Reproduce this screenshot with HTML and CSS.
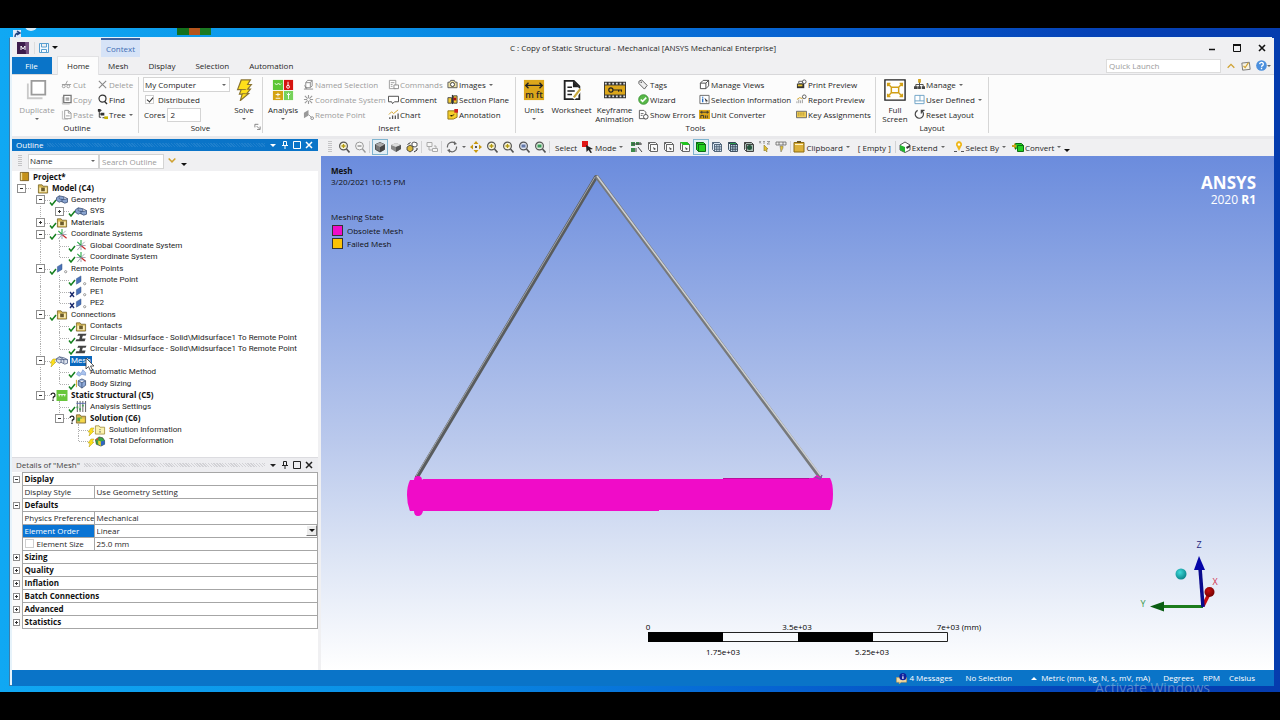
FILE: index.html
```html
<!DOCTYPE html>
<html lang="en">
<head>
<meta charset="utf-8">
<title>C : Copy of Static Structural - Mechanical [ANSYS Mechanical Enterprise]</title>
<link rel="stylesheet" href="styles.css">
</head>
<body>
<svg class="defs" aria-hidden="true">
  <defs>
    <radialGradient id="ballC" cx=".4" cy=".35" r=".7"><stop offset="0" stop-color="#3fdada"/><stop offset="1" stop-color="#067f86"/></radialGradient>
    <radialGradient id="ballR" cx=".4" cy=".35" r=".7"><stop offset="0" stop-color="#c80f0f"/><stop offset="1" stop-color="#6e0000"/></radialGradient>
  </defs>
  <symbol id="logo" viewBox="0 0 12 12"><path fill="#3d1d4c" d="M0 0h12v12H0z"/><path fill="#74507f" d="M8 0h4v12H9z"/><path fill="none" stroke="#fff" d="M4 8V4l2 3 2-3v4"/></symbol>
  <symbol id="save" viewBox="0 0 12 12"><path fill="#f4faff" stroke="#5a9fd0" d="M1.500 1.500h9v9h-9zM3.500 1.500v3.500h5v-3.500M3.500 10.500v-3h5v3"/></symbol>
  <symbol id="duplicate" viewBox="0 0 24 24"><path fill="none" stroke="#c9c9c9" stroke-width="2" d="M2 5v16h16"/><path fill="#fff" stroke="#9b9b9b" stroke-width="2" d="M6 2h15v15H6z"/></symbol>
  <symbol id="cut" viewBox="0 0 12 12"><path fill="none" stroke="#999" d="M1 6h10M7 2L5 6"/><circle cx="3" cy="8" r="1.600" fill="none" stroke="#999"/><circle cx="8" cy="8" r="1.600" fill="none" stroke="#999"/></symbol>
  <symbol id="copy" viewBox="0 0 12 12"><path fill="none" stroke="#bbb" d="M1.500 3v8h8"/><path fill="#fff" stroke="#777" stroke-width="1.400" d="M3 1.500h8v8H3z"/><path stroke="#666" d="M5 4.500h4M5 6.500h4"/></symbol>
  <symbol id="paste" viewBox="0 0 12 12"><path fill="none" stroke="#bbb" d="M1.500 2v9h6"/><path fill="#fff" stroke="#999" d="M4 1.500h4l3 3v6H4zM8 1.500v3h3"/><path stroke="#999" d="M5.500 7.500h4"/></symbol>
  <symbol id="delete" viewBox="0 0 12 12"><path stroke="#888" stroke-width="1.200" d="M2 2l8 8M10 2l-8 8"/></symbol>
  <symbol id="find" viewBox="0 0 12 12"><circle cx="6" cy="5" r="3.800" fill="none" stroke="#333" stroke-width="1.300"/><path stroke="#333" stroke-width="1.500" d="M8 8l3 3"/></symbol>
  <symbol id="tree" viewBox="0 0 12 12"><path fill="none" stroke="#333" d="M1 1.500h4M2.500 2v7M2.500 5.500h4M6 9.500h6M2.500 9h2"/><path fill="#333" d="M1 0h3v3H1zM4 4h4v3H4z"/><path fill="#c8b400" d="M8 8h4v3H8z"/></symbol>
  <symbol id="bolt" viewBox="0 0 24 24"><path fill="#ffe01a" stroke="#8a7430" stroke-width="1.300" d="M9 1h10l-3 5h4l-4 5h3l-4 5h2L8 23.500l2-7H7l2-5H5z"/><path stroke="#8a7430" d="M9 11.500h5M10 16h4"/></symbol>
  <symbol id="analysis" viewBox="0 0 24 24"><path fill="#5cc735" d="M1 1h11v11H1z"/><path fill="#d5140f" d="M13 1h10v11H13z"/><path fill="#d4a312" d="M1 13h11v10H1z"/><path fill="#76d25a" d="M13 13h10v10H13z"/><path fill="none" stroke="#fff" d="M3 5l2 1 2-1 2 1 1-1M17.500 3v5M4 17h5M6.500 15v4M4 21h5M16 16l2 2 2-2M18 15v7"/><circle cx="17.500" cy="8.500" r="1.600" fill="none" stroke="#fff"/></symbol>
  <symbol id="named" viewBox="0 0 12 12"><path fill="#fff" stroke="#888" d="M3 4l2-2.500h5v6l-2 2H3zM3 4h5v5M8 4l2-2.500M1 11h10"/><path fill="#888" d="M1 6l4 4-2 1z"/></symbol>
  <symbol id="coordg" viewBox="0 0 12 12"><path stroke="#9a9a9a" stroke-width="1.200" d="M6 1v10M1 6h10M2 2l8 8M10 2l-8 8"/><circle cx="6" cy="6" r="1.500" fill="#fff"/></symbol>
  <symbol id="remoteg" viewBox="0 0 12 12"><path fill="#999" d="M1 4l5-3v6l-5 3z"/><path stroke="#999" fill="none" d="M6 6l3 3"/><circle cx="10" cy="10" r="1.500" fill="none" stroke="#888"/></symbol>
  <symbol id="commands" viewBox="0 0 12 12"><path fill="#fff" stroke="#999" d="M1.500 1.500h7v9h-7z"/><path stroke="#999" d="M3 4h4M3 6h2M3 8h2"/><path fill="#fff" stroke="#888" d="M6.500 6.500h5v4h-5z"/></symbol>
  <symbol id="comment" viewBox="0 0 12 12"><path fill="#fff" stroke="#444" d="M.500 2.500h11v6H7l-2 2-1-2H.500z"/></symbol>
  <symbol id="chart" viewBox="0 0 12 12"><path stroke="#555" stroke-width="1.400" d="M2 11V9M5 11V7M8 11V7M11 11V5"/><path fill="none" stroke="#d0a020" d="M1 6l3-3 2 2 5-4"/></symbol>
  <symbol id="camera" viewBox="0 0 12 12"><path fill="#efe3a8" stroke="#555" d="M1 3.500h2l1-2h4l1 2h2v6H1z"/><circle cx="6" cy="6" r="2.200" fill="#fff" stroke="#333"/></symbol>
  <symbol id="section" viewBox="0 0 12 12"><path fill="#f4cc30" stroke="#444" d="M1 4h4v6H1zM7 2h4v8H7z"/><path stroke="#333" stroke-width="1.400" d="M6 1v10"/><path fill="#a11" d="M7 4h3v3H7z"/></symbol>
  <symbol id="annot" viewBox="0 0 12 12"><path fill="#f6cf2b" stroke="#8f7410" d="M1 2h10v7l-4 2H1z"/><path fill="#c22" d="M8 0h4v4H8z"/><path stroke="#7b6414" d="M3 7l2 1 3-2"/></symbol>
  <symbol id="units" viewBox="0 0 24 24"><path fill="#dca71b" d="M1 1h22v22H1z"/><path stroke="#222" stroke-width="1.500" fill="none" d="M3 7h18M6 4L3 7l3 3M18 4l3 3-3 3"/></symbol>
  <symbol id="worksheet" viewBox="0 0 24 24"><path fill="#fff" stroke="#222" stroke-width="2" d="M4 2h10l6 6v14H4z"/><path fill="#222" d="M13 2v7h7z"/><path stroke="#222" stroke-width="1.600" d="M7 9h5M7 13h8M7 17h5"/><path stroke="#fff" stroke-width="5" d="M13 21l8-10"/><path stroke="#c8a83c" stroke-width="2.400" d="M14 20l7-9"/></symbol>
  <symbol id="film" viewBox="0 0 24 24"><path fill="#333" d="M0 3h24v18H0z"/><path stroke="#ddd" stroke-width="2" stroke-dasharray="2 2" d="M1 5h22M1 19h22"/><path fill="#dca71b" d="M1 7h22v10H1z"/><path fill="none" stroke="#222" stroke-width="1.300" d="M10 12h9v2M16 12v2"/><circle cx="7.500" cy="12" r="2.300" fill="none" stroke="#222" stroke-width="1.300"/></symbol>
  <symbol id="tag" viewBox="0 0 12 12"><path fill="#eee" stroke="#555" d="M1 2.500L4 1l6 6-3 4-6-6z"/><circle cx="3.500" cy="3.500" r=".8" fill="#444"/></symbol>
  <symbol id="wizard" viewBox="0 0 12 12"><circle cx="6" cy="6" r="5.300" fill="#58b848" stroke="#318a2c" stroke-width=".8"/><path fill="none" stroke="#fff" stroke-width="1.700" d="M3 6l2 2 4-4"/></symbol>
  <symbol id="errors" viewBox="0 0 12 12"><path fill="#fff" stroke="#555" d="M1.500 1.500h5l2 2v7h-7z"/><path stroke="#666" d="M3 5h3M3 7h2"/><circle cx="8.500" cy="8.500" r="2.500" fill="#fff" stroke="#444"/></symbol>
  <symbol id="cube" viewBox="0 0 12 12"><path fill="#fff" stroke="#444" d="M1.500 4.500h6v6h-6zM1.500 4.500l3-3h6v6l-3 3M7.500 4.500l3-3"/></symbol>
  <symbol id="selinfo" viewBox="0 0 12 12"><path fill="#fff" stroke="#666" d="M1 1.500h10v9H1z"/><path stroke="#2770c8" stroke-width="1.500" d="M4 3v1M4 5v4"/><path fill="#333" d="M6 4l4 4H8v2z"/></symbol>
  <symbol id="uconv" viewBox="0 0 12 12"><path fill="#dca71b" d="M0 1h12v10H0z"/><path fill="none" stroke="#333" d="M1 3.500h10M3 2v3M9 2v3M2 10V7h3v3M7 10V7M9 7v3"/></symbol>
  <symbol id="print" viewBox="0 0 12 12"><path fill="#333" d="M1 5h8v5H1z"/><path fill="#e8c430" d="M2 6h5v2H2z"/><path fill="#fff" stroke="#555" d="M3 2.500h4V5H3z"/><circle cx="9" cy="3" r="2" fill="#fff" stroke="#555"/></symbol>
  <symbol id="report" viewBox="0 0 12 12"><path stroke="#999" fill="none" d="M1 10V8M3 10V6M5 10V7M7 10V6"/><path fill="none" stroke="#d0a020" d="M1 6l3-2 3 1"/><circle cx="9" cy="3" r="2" fill="#fff" stroke="#555"/></symbol>
  <symbol id="keys" viewBox="0 0 12 12"><path fill="#f1cf5a" stroke="#666" d="M.500 2.500h11v7H.500z"/><path stroke="#8a6d14" stroke-dasharray="1 1" d="M2 4.500h8M2 6.500h8"/></symbol>
  <symbol id="full" viewBox="0 0 24 24"><path fill="#fff" stroke="#222" stroke-width="1.500" d="M1 1h22v22H1z"/><path fill="none" stroke="#d2a017" stroke-width="1.600" d="M8 9h8v6H8zM8 9L4 5M16 9l4-4M8 15l-4 4M16 15l4 4M4 8V5h3M20 8V5h-3M4 16v3h3M20 16v3h-3"/></symbol>
  <symbol id="manage" viewBox="0 0 12 12"><path fill="none" stroke="#444" d="M6 3v3M2 9V6h8v3M6 6v3"/><path fill="#d2a017" d="M4.500 0h3v4h-3z"/><path fill="#444" d="M0 8h4v3H0zM4.500 8h3v3h-3zM8.500 8H12v3H8.500z"/></symbol>
  <symbol id="user" viewBox="0 0 12 12"><path fill="#fff" stroke="#6aa0c4" d="M1 1.500h10v9H1zM6.500 1.500v6M1 7.500h10"/></symbol>
  <symbol id="reset" viewBox="0 0 12 12"><path fill="none" stroke="#444" stroke-width="1.300" d="M4 1.500a4.500 4.500 0 1 0 4.500.5M8 5V1.500h3.500"/></symbol>
  <symbol id="mag" viewBox="0 0 12 12"><circle cx="5.500" cy="5" r="3.900" fill="#f8f4d8" stroke="#555" stroke-width="1.200"/><path stroke="#555" stroke-width="1.600" d="M8.500 8l3 3.500"/><path stroke="#b39a10" stroke-width="1.300" d="M3.500 5h4M5.500 3v4"/></symbol>
  <symbol id="magg" viewBox="0 0 12 12"><circle cx="5.500" cy="5" r="3.900" fill="#f7f7f7" stroke="#999"/><path stroke="#999" stroke-width="1.400" d="M8.500 8l3 3.500M3.500 5h4"/></symbol>
  <symbol id="magb" viewBox="0 0 12 12"><circle cx="5.500" cy="5" r="3.900" fill="#dfe5f2" stroke="#555" stroke-width="1.200"/><path fill="#6478a8" d="M3.500 3.500h4v3h-4z"/><path stroke="#555" stroke-width="1.600" d="M8.500 8l3 3.500"/></symbol>
  <symbol id="magn" viewBox="0 0 12 12"><circle cx="5.500" cy="5" r="3.900" fill="#dff0df" stroke="#555" stroke-width="1.200"/><path fill="#3a9a58" d="M3.500 3.500h4v3h-4z"/><path stroke="#555" stroke-width="1.600" d="M8.500 8l3 3.500"/></symbol>
  <symbol id="shaded" viewBox="0 0 12 12"><path fill="#777" stroke="#333" stroke-width=".8" d="M1.500 3.500L6 1.500l4.500 2v5L6 11 1.500 8.500z"/><path fill="#444" d="M6 6l4.500-2.500v5L6 11z"/><path fill="#aaa" d="M1.500 3.500L6 1.500l4.500 2L6 6z"/></symbol>
  <symbol id="slab" viewBox="0 0 12 12"><path fill="#888" d="M1 4l5-2 5 2v4l-5 3-5-3z"/><path fill="#ddd" d="M1 4l5-2 5 2-5 2z"/><path fill="#555" d="M6 6l5-2v4l-5 3z"/></symbol>
  <symbol id="swap" viewBox="0 0 12 12"><path fill="#d8b63a" stroke="#333" stroke-width=".8" d="M1 6l3-2 3 2v3l-3 2-3-2z"/><path fill="#fff" stroke="#333" stroke-width=".8" d="M6 2l2-1 3 1v3L9 6 6 5z"/><path fill="none" stroke="#333" d="M1.500 3.500l3-2M11 7v2l-3 2"/></symbol>
  <symbol id="layers" viewBox="0 0 12 12"><path fill="#f6f6f6" stroke="#aaa" d="M1 1.500h5v4H1zM6.500 7.500h5v3h-5z"/><path fill="none" stroke="#aaa" d="M3 6v3h3M8 5h2v2"/></symbol>
  <symbol id="rotate" viewBox="0 0 12 12"><path fill="none" stroke="#666" stroke-width="1.200" d="M1.500 6.500A4.500 4.500 0 0 1 9 2.500M10.500 5.500A4.500 4.500 0 0 1 3 9.500"/><path fill="#666" d="M8 0l3 3-3 1zM4 12L1 9l3-1z"/></symbol>
  <symbol id="pan" viewBox="0 0 12 12"><path fill="#c99a10" d="M6 0l2.500 3h-5zM6 12l2.500-3h-5zM0 6l3-2.500v5zM12 6L9 3.500v5z"/><path fill="#555" d="M5 5h2v2H5z"/></symbol>
  <symbol id="pick" viewBox="0 0 12 12"><path fill="#e01616" d="M0 0h6v6H0z"/><path fill="#222" d="M4 4l7 4-3 .5 2 3-1.500.5-2-3-2 2z"/></symbol>
  <symbol id="filter" viewBox="0 0 12 12"><path fill="#3d8a4c" d="M0 1h4v4H0zM5 1h3v3H5zM0 7h4v4H0z"/><path stroke="#444" fill="none" d="M1 3h10M9 1v3M5 7v4M7 6l4 5"/></symbol>
  <symbol id="selcube" viewBox="0 0 12 12"><path fill="#fafafa" stroke="#666" d="M3.500 3.500h7v7h-7zM1.500 8.500v-7h7l2 2M1.500 1.500l2 2M1.500 8.500l2 2"/><path fill="#444" d="M6 6l3 2-2 1z"/></symbol>
  <symbol id="selface" viewBox="0 0 12 12"><path fill="#fafafa" stroke="#666" d="M3.500 3.500h7v7h-7zM1.500 8.500v-7h7l2 2M1.500 8.500l2 2"/><path fill="#21c321" d="M1 1h7l3 3H4z"/><path fill="#444" d="M6 6l3 2-2 1z"/></symbol>
  <symbol id="selbody" viewBox="0 0 12 12"><path fill="#22cf22" stroke="#0d6d12" d="M3.500 3.500h7v7h-7zM1.500 8.500v-7h7l2 2h-7l-2-2M1.500 8.500l2 2v-7l-2-2z"/></symbol>
  <symbol id="selnode" viewBox="0 0 12 12"><path fill="#dbe7f4" stroke="#44596e" stroke-width=".9" d="M3.500 3.500h7v7h-7zM1.500 8.500v-7h7l2 2M1.500 8.500l2 2M1.500 1.500l2 2M5.800 3.500v7M8.200 3.500v7M3.500 5.800h7M3.500 8.200h7"/></symbol>
  <symbol id="selelem" viewBox="0 0 12 12"><path fill="#c3dcec" stroke="#345" stroke-width=".9" d="M3.500 3.500h7v7h-7zM5.800 3.500v7M8.200 3.500v7M3.500 5.800h7M3.500 8.200h7M1.500 1.500v7l2 2"/><path fill="#2d9d50" stroke="#345" d="M1.500 1.500h7l2 2h-7z"/></symbol>
  <symbol id="seldark" viewBox="0 0 12 12"><path fill="#a9bdb5" stroke="#444" d="M3.500 3.500h7v7h-7zM1.500 8.500v-7h7l2 2M1.500 1.500l2 2M1.500 8.500l2 2"/><circle cx="6.500" cy="6.500" r="2.500" fill="#24563c"/></symbol>
  <symbol id="xyz" viewBox="0 0 12 12"><path fill="none" stroke="#888" stroke-width=".8" d="M0 0l2 2.500M2 0L0 2.500M4 0l1 1 1-1M5 1v2M8 .500h3L8 3h3"/><path fill="#e6c12e" stroke="#8b7a26" stroke-width=".6" d="M5 4l4 4H7.500L8 11l-2-2-1 1z"/></symbol>
  <symbol id="probe" viewBox="0 0 12 12"><path fill="#eee" stroke="#666" stroke-width=".8" d="M1 1h10v3H1zM4 1v3M8 1v3"/><path fill="#e6c12e" stroke="#777" stroke-width=".6" d="M5 5h3v2L6 11z"/></symbol>
  <symbol id="clip" viewBox="0 0 12 12"><path fill="#dcb13a" stroke="#8b6b13" d="M1 1.500h10v9.500H1z"/><path stroke="#fff3c2" d="M2 3.500h8"/><path fill="#6a5520" d="M4 0h4v2H4z"/></symbol>
  <symbol id="extend" viewBox="0 0 12 12"><path fill="#fff" stroke="#333" stroke-width=".8" d="M1 4l5-3 5 3v5l-5 2.500L1 9z"/><path fill="#23b52e" d="M1 4l5 2v5.500L1 9z"/><path fill="#333" d="M7 6l4-2v2L8 8z"/></symbol>
  <symbol id="pin" viewBox="0 0 12 12"><path fill="#efb81d" d="M6 0a3.500 3.500 0 0 1 2 6L6 10 4 6a3.500 3.500 0 0 1 2-6z"/><circle cx="6" cy="3.500" r="1.200" fill="#fff"/><path stroke="#555" d="M1 10.500h3M8 10.500h3"/></symbol>
  <symbol id="convert" viewBox="0 0 12 12"><path fill="#22cf22" stroke="#0d6d12" d="M5.500 4.500h6v6h-6zM3.500 8.500v-6h6l2 2"/><path fill="#c9a21c" d="M0 4h2V2l3 3-3 3V6H0z"/></symbol>
  <symbol id="chk" viewBox="0 0 8 12"><path fill="none" stroke="#15801f" stroke-width="1.500" d="M1 8.500L3 11l4-5"/></symbol>
  <symbol id="xx" viewBox="0 0 8 12"><path stroke="#1a2a6c" stroke-width="1.400" d="M2 6l4 5M6 6l-4 5"/></symbol>
  <symbol id="zap" viewBox="0 0 8 12"><path fill="#ffe21a" stroke="#b39a14" stroke-width=".5" d="M4 4h3L5 7h2L2 12l1-4H1z"/></symbol>
  <symbol id="qm" viewBox="0 0 8 12"><path fill="none" stroke="#222" stroke-width="1.300" d="M2 6a2 2 0 1 1 2.500 2L4 9.500M4 10.500V12"/></symbol>
  <symbol id="book" viewBox="0 0 12 12"><path fill="#c5921a" stroke="#5e4710" stroke-width=".8" d="M2 1.500h9v9H2z"/><path fill="#f3df9c" d="M2.500 2H4v8H2.500z"/></symbol>
  <symbol id="folder" viewBox="0 0 12 12"><path fill="#d8b850" stroke="#6d5a20" stroke-width=".8" d="M1 2h4l1 1.500h5V11H1z"/><path fill="#fbeeb8" d="M2 5h8v5H2z"/><path fill="#6b5b2b" d="M4 5h4v4H4z"/></symbol>
  <symbol id="foldgreen" viewBox="0 0 12 12"><path fill="#d8b850" stroke="#6d5a20" stroke-width=".8" d="M1 2h4l1 1.500h5V11H1z"/><path fill="#4ba84b" d="M2 5h5v4H2z"/><path fill="#f5d84a" d="M5 6h5v4H5z"/></symbol>
  <symbol id="foldplain" viewBox="0 0 12 12"><path fill="#fbf2b0" stroke="#98822b" stroke-width=".8" d="M1 2h4l1 1.500h5V11H1z"/><path stroke="#555" d="M6 5.500v1M6 7.500v2"/></symbol>
  <symbol id="geom" viewBox="0 0 12 12"><path fill="#8aa4cf" stroke="#32476f" stroke-width=".8" d="M0 4l3-2 5 1 4 2v4l-3 1-4-2-2 1-3-2zM3 2v3l3 1V9M8 3v3l4-1M6 6l2 0"/></symbol>
  <symbol id="meshic" viewBox="0 0 12 12"><path fill="#dce2ee" stroke="#41537c" stroke-width=".8" d="M0 4l3-2 5 1 4 2v4l-3 1-4-2-2 1-3-2zM0 4l5 1 7 0M5 5v3M3 2l5 3v4"/></symbol>
  <symbol id="coord" viewBox="0 0 12 12"><path stroke="#2aa84a" stroke-width="1.200" d="M6 6V0M6 6L2 2"/><path stroke="#c42a2a" stroke-width="1.300" d="M6 6l5 4"/><path stroke="#889" stroke-width=".8" d="M6 6l-4 5M1 6h10M6 6l4-4M6 6v5"/></symbol>
  <symbol id="remote" viewBox="0 0 12 12"><path fill="#4a72b8" stroke="#2c4a80" stroke-width=".5" d="M1 4l5-3v6l-5 3z"/><circle cx="10" cy="9.500" r="1.200" fill="none" stroke="#777" stroke-width=".8"/></symbol>
  <symbol id="beam" viewBox="0 0 12 12"><path fill="#444" d="M3 2h9l-1 2H8L7 7h4l-1 3H0l1-2h3l1-4H2z"/></symbol>
  <symbol id="auto" viewBox="0 0 12 12"><path fill="#a9c3ee" stroke="#6788c4" stroke-width=".6" d="M1 8l2-3 3 2 2-4 3 3v3L7 8 4 10z"/></symbol>
  <symbol id="sizing" viewBox="0 0 12 12"><path fill="#8fabda" stroke="#32476f" stroke-width=".8" d="M3 3l4-2 4 2v5L7 11 3 8zM3 3l4 2 4-2M7 5v6"/><path stroke="#c9a21c" d="M1 2v8"/></symbol>
  <symbol id="struct" viewBox="0 0 12 12"><path fill="#67c63a" d="M0 0h12v12H0z"/><path fill="none" stroke="#fff" d="M2 5h8M3 5v2M6 5v2M9 5v2"/></symbol>
  <symbol id="setting" viewBox="0 0 12 12"><path stroke="#555" d="M2 0v12M5 0v12M8 0v12M11 0v12"/><path fill="#4aa35a" d="M1 6h2v2H1zM4 8h2v2H4zM7 4h2v2H7z"/><path fill="#5468b0" d="M1 2h10v1H1z"/></symbol>
  <symbol id="deform" viewBox="0 0 12 12"><path fill="#39a545" stroke="#222" stroke-width=".6" d="M1 4l4-3 4 1 2 3v4l-4 2-5-2z"/><path fill="#d64a28" d="M1 4l3-2v3z"/><path fill="#e9cf2c" d="M4 5l3 1v5L4 9z"/><path fill="#2f64c4" d="M7 6l4-1v4l-4 2z"/></symbol>
</svg>

<div class="desktop">
  <div class="shortcut"><svg viewBox="0 0 8 8"><path fill="#dfeafa" d="M0 0h8v8H0z"/><path fill="none" stroke="#21417f" stroke-width="1.400" d="M2 7c0-3 1-4 4-4M4 1l3 2-3 2"/></svg></div>
  <div class="globe"></div>
  <div class="books"></div>

  <main class="window">
    <header class="titlebar">
      <div class="quick">
        <svg class="ic12"><use href="#logo"/></svg>
        <button class="plain qsave" aria-label="Save"><svg class="ic12"><use href="#save"/></svg></button>
        <button class="plain" aria-label="Customize"><span class="dd dark"></span></button>
      </div>
      <div class="context">Context</div>
      <h1>C : Copy of Static Structural - Mechanical [ANSYS Mechanical Enterprise]</h1>
      <div class="winbtns">
        <button class="plain" aria-label="Minimize"><svg viewBox="0 0 8 8"><path stroke="#111" stroke-width="1.500" d="M1 5.500h6"/></svg></button>
        <button class="plain" aria-label="Maximize"><svg viewBox="0 0 8 8"><path fill="none" stroke="#111" d="M.500.500h7v7h-7z"/><path fill="#111" d="M0 0h8v2H0z"/></svg></button>
        <button class="plain" aria-label="Close"><svg viewBox="0 0 8 8"><path stroke="#111" stroke-width="1.600" d="M1 1l6 6M7 1L1 7"/></svg></button>
      </div>
    </header>

    <nav class="tabs">
      <button class="tab file">File</button>
      <button class="tab active">Home</button>
      <button class="tab">Mesh</button>
      <button class="tab">Display</button>
      <button class="tab">Selection</button>
      <button class="tab">Automation</button>
      <div class="tabtools">
        <input class="launch" type="text" placeholder="Quick Launch" aria-label="Quick Launch">
        <button class="plain" aria-label="Collapse ribbon"><svg viewBox="0 0 12 12"><path fill="none" stroke="#cfa233" stroke-width="1.600" d="M2 8l4-4 4 4"/></svg></button>
        <button class="plain" aria-label="Options"><svg viewBox="0 0 12 12"><path fill="#f8f4e4" stroke="#666" d="M1 2.500l9-1 1 8.500-9 1z"/><path fill="none" stroke="#cfa233" stroke-width="1.400" d="M3 6l2 2 4-6"/></svg></button>
        <button class="plain help" aria-label="Help"><svg viewBox="0 0 12 12"><circle cx="6" cy="6" r="5.800" fill="#4b8fdd"/><path fill="none" stroke="#fff" stroke-width="1.500" d="M4 4.500a2 2 0 1 1 2.500 2L6 7.500M6 8.500V10"/></svg><span class="dd"></span></button>
      </div>
    </nav>

    <section class="ribbon">
      <div class="group g-outline">
        <button class="big off"><svg><use href="#duplicate"/></svg>Duplicate<span class="dd"></span></button>
        <div class="col">
          <button class="small off"><svg><use href="#cut"/></svg>Cut</button>
          <button class="small off"><svg><use href="#copy"/></svg>Copy</button>
          <button class="small off"><svg><use href="#paste"/></svg>Paste</button>
        </div>
        <div class="col">
          <button class="small off"><svg><use href="#delete"/></svg>Delete</button>
          <button class="small"><svg><use href="#find"/></svg>Find</button>
          <button class="small"><svg><use href="#tree"/></svg>Tree<span class="dd"></span></button>
        </div>
        <h2>Outline</h2>
      </div>
      <div class="group g-solve">
        <div class="col form">
          <div class="pick"><select aria-label="Solve location"><option>My Computer</option></select><span class="dd"></span></div>
          <label class="tick"><input type="checkbox" checked>Distributed</label>
          <label class="cores">Cores<input type="text" value="2"></label>
        </div>
        <button class="big"><svg><use href="#bolt"/></svg>Solve<span class="dd"></span></button>
        <h2>Solve</h2>
        <button class="plain launcher" aria-label="Solve options"><svg viewBox="0 0 8 8"><path fill="none" stroke="#777" d="M1 5V1.500h4M3 3.500l3 3M7 4v3.500H3.500"/></svg></button>
      </div>
      <div class="group g-insert">
        <button class="big"><svg><use href="#analysis"/></svg>Analysis<span class="dd"></span></button>
        <div class="col">
          <button class="small off"><svg><use href="#named"/></svg>Named Selection</button>
          <button class="small off"><svg><use href="#coordg"/></svg>Coordinate System</button>
          <button class="small off"><svg><use href="#remoteg"/></svg>Remote Point</button>
        </div>
        <div class="col">
          <button class="small off"><svg><use href="#commands"/></svg>Commands</button>
          <button class="small"><svg><use href="#comment"/></svg>Comment</button>
          <button class="small"><svg><use href="#chart"/></svg>Chart</button>
        </div>
        <div class="col">
          <button class="small"><svg><use href="#camera"/></svg>Images<span class="dd"></span></button>
          <button class="small"><svg><use href="#section"/></svg>Section Plane</button>
          <button class="small"><svg><use href="#annot"/></svg>Annotation</button>
        </div>
        <h2>Insert</h2>
      </div>
      <div class="group g-tools">
        <button class="big"><span class="unitbox"><svg><use href="#units"/></svg><span class="mft">m ft</span></span>Units<span class="dd"></span></button>
        <button class="big"><svg><use href="#worksheet"/></svg>Worksheet</button>
        <button class="big"><svg><use href="#film"/></svg>Keyframe<br>Animation</button>
        <div class="col">
          <button class="small"><svg><use href="#tag"/></svg>Tags</button>
          <button class="small"><svg><use href="#wizard"/></svg>Wizard</button>
          <button class="small"><svg><use href="#errors"/></svg>Show Errors</button>
        </div>
        <div class="col">
          <button class="small"><svg><use href="#cube"/></svg>Manage Views</button>
          <button class="small"><svg><use href="#selinfo"/></svg>Selection Information</button>
          <button class="small"><svg><use href="#uconv"/></svg>Unit Converter</button>
        </div>
        <div class="col">
          <button class="small"><svg><use href="#print"/></svg>Print Preview</button>
          <button class="small"><svg><use href="#report"/></svg>Report Preview</button>
          <button class="small"><svg><use href="#keys"/></svg>Key Assignments</button>
        </div>
        <h2>Tools</h2>
      </div>
      <div class="group g-layout">
        <button class="big"><svg><use href="#full"/></svg>Full<br>Screen</button>
        <div class="col">
          <button class="small"><svg><use href="#manage"/></svg>Manage<span class="dd"></span></button>
          <button class="small"><svg><use href="#user"/></svg>User Defined<span class="dd"></span></button>
          <button class="small"><svg><use href="#reset"/></svg>Reset Layout</button>
        </div>
        <h2>Layout</h2>
      </div>
    </section>

    <div class="work">
      <aside class="side">
        <section class="outline">
          <header class="panehead blue">
            <h3>Outline</h3><span class="hatch"></span>
            <button class="plain" aria-label="Menu"><span class="dd"></span></button>
            <button class="plain" aria-label="Pin"><svg viewBox="0 0 8 8"><path fill="none" stroke="currentColor" d="M2.500 4V.500h3V4M1 4.500h6M4 5v3"/></svg></button>
            <button class="plain" aria-label="Maximize"><svg viewBox="0 0 8 8"><path fill="none" stroke="currentColor" d="M.500.500h7v7h-7z"/></svg></button>
            <button class="plain" aria-label="Close"><svg viewBox="0 0 8 8"><path stroke="currentColor" stroke-width="1.500" d="M1 1l6 6M7 1L1 7"/></svg></button>
          </header>
          <div class="treebar">
            <span class="grip"></span>
            <div class="pick"><select aria-label="Filter by"><option>Name</option></select><span class="dd"></span></div>
            <input type="text" placeholder="Search Outline" aria-label="Search Outline">
            <button class="plain" aria-label="Expand"><svg viewBox="0 0 12 12"><path fill="none" stroke="#cfa233" stroke-width="1.800" d="M2 3l4 4 4-4"/></svg></button>
            <span class="dd dark low"></span>
          </div>
          <ul class="tree">
            <li class="root"><svg class="ti"><use href="#book"/></svg><b>Project*</b></li>
            <li><i class="box"></i><i class="st"></i><svg class="ti"><use href="#folder"/></svg><b>Model (C4)</b></li>
            <li><i></i><i class="box"></i><svg class="st"><use href="#chk"/></svg><svg class="ti"><use href="#geom"/></svg><span>Geometry</span></li>
            <li><i></i><i class="v"></i><i class="box plus"></i><svg class="st"><use href="#chk"/></svg><svg class="ti"><use href="#geom"/></svg><span>SYS</span></li>
            <li><i></i><i class="box plus"></i><svg class="st"><use href="#chk"/></svg><svg class="ti"><use href="#folder"/></svg><span>Materials</span></li>
            <li><i></i><i class="box"></i><svg class="st"><use href="#chk"/></svg><svg class="ti"><use href="#coord"/></svg><span>Coordinate Systems</span></li>
            <li><i></i><i class="v"></i><i class="v h"></i><svg class="st"><use href="#chk"/></svg><svg class="ti"><use href="#coord"/></svg><span>Global Coordinate System</span></li>
            <li><i></i><i class="v"></i><i class="v h end"></i><svg class="st"><use href="#chk"/></svg><svg class="ti"><use href="#coord"/></svg><span>Coordinate System</span></li>
            <li><i></i><i class="box"></i><svg class="st"><use href="#chk"/></svg><svg class="ti"><use href="#remote"/></svg><span>Remote Points</span></li>
            <li><i></i><i class="v"></i><i class="v h"></i><svg class="st"><use href="#chk"/></svg><svg class="ti"><use href="#remote"/></svg><span>Remote Point</span></li>
            <li><i></i><i class="v"></i><i class="v h"></i><svg class="st"><use href="#xx"/></svg><svg class="ti"><use href="#remote"/></svg><span>PE1</span></li>
            <li><i></i><i class="v"></i><i class="v h end"></i><svg class="st"><use href="#xx"/></svg><svg class="ti"><use href="#remote"/></svg><span>PE2</span></li>
            <li><i></i><i class="box"></i><svg class="st"><use href="#chk"/></svg><svg class="ti"><use href="#folder"/></svg><span>Connections</span></li>
            <li><i></i><i class="v"></i><i class="v h"></i><svg class="st"><use href="#chk"/></svg><svg class="ti"><use href="#folder"/></svg><span>Contacts</span></li>
            <li><i></i><i class="v"></i><i class="v h"></i><svg class="st"><use href="#chk"/></svg><svg class="ti"><use href="#beam"/></svg><span>Circular - Midsurface - Solid\Midsurface1 To Remote Point</span></li>
            <li><i></i><i class="v"></i><i class="v h end"></i><svg class="st"><use href="#chk"/></svg><svg class="ti"><use href="#beam"/></svg><span>Circular - Midsurface - Solid\Midsurface1 To Remote Point</span></li>
            <li><i></i><i class="box"></i><svg class="st"><use href="#zap"/></svg><svg class="ti"><use href="#meshic"/></svg><span class="picked">Mesh<svg class="cursor" viewBox="0 0 10 15"><path fill="#fff" stroke="#333" stroke-width=".8" d="M1 1v11l2.500-2.500L5.500 14l2-1L5.500 9H9z"/></svg></span></li>
            <li><i></i><i class="v"></i><i class="v h"></i><svg class="st"><use href="#chk"/></svg><svg class="ti"><use href="#auto"/></svg><span>Automatic Method</span></li>
            <li><i></i><i class="v"></i><i class="v h end"></i><svg class="st"><use href="#chk"/></svg><svg class="ti"><use href="#sizing"/></svg><span>Body Sizing</span></li>
            <li><i></i><i class="box"></i><svg class="st"><use href="#qm"/></svg><svg class="ti"><use href="#struct"/></svg><b>Static Structural (C5)</b></li>
            <li><i></i><i></i><i class="v h"></i><svg class="st"><use href="#chk"/></svg><svg class="ti"><use href="#setting"/></svg><span>Analysis Settings</span></li>
            <li><i></i><i></i><i class="box"></i><svg class="st"><use href="#qm"/></svg><svg class="ti"><use href="#foldgreen"/></svg><b>Solution (C6)</b></li>
            <li><i></i><i></i><i></i><i class="v h"></i><svg class="st"><use href="#zap"/></svg><svg class="ti"><use href="#foldplain"/></svg><span>Solution Information</span></li>
            <li><i></i><i></i><i></i><i class="v h end"></i><svg class="st"><use href="#zap"/></svg><svg class="ti"><use href="#deform"/></svg><span>Total Deformation</span></li>
          </ul>
        </section>

        <section class="details">
          <header class="panehead">
            <h3>Details of "Mesh"</h3><span class="hatch"></span>
            <button class="plain" aria-label="Menu"><span class="dd"></span></button>
            <button class="plain" aria-label="Pin"><svg viewBox="0 0 8 8"><path fill="none" stroke="currentColor" d="M2.500 4V.500h3V4M1 4.500h6M4 5v3"/></svg></button>
            <button class="plain" aria-label="Maximize"><svg viewBox="0 0 8 8"><path fill="none" stroke="currentColor" d="M.500.500h7v7h-7z"/></svg></button>
            <button class="plain" aria-label="Close"><svg viewBox="0 0 8 8"><path stroke="currentColor" stroke-width="1.500" d="M1 1l6 6M7 1L1 7"/></svg></button>
          </header>
          <table>
            <colgroup><col class="c1"><col class="c2"><col></colgroup>
            <tr><td class="tog"><i class="box"></i></td><th colspan="2">Display</th></tr>
            <tr><td class="tog"></td><td>Display Style</td><td>Use Geometry Setting</td></tr>
            <tr><td class="tog"><i class="box"></i></td><th colspan="2">Defaults</th></tr>
            <tr><td class="tog"></td><td>Physics Preference</td><td>Mechanical</td></tr>
            <tr><td class="tog"></td><td class="on">Element Order</td><td><div class="drop"><select aria-label="Element Order"><option>Linear</option></select><span class="knob"><span class="dd"></span></span></div></td></tr>
            <tr><td class="tog"></td><td><label class="esize"><input type="checkbox">Element Size</label></td><td>25.0 mm</td></tr>
            <tr><td class="tog"><i class="box plus"></i></td><th colspan="2">Sizing</th></tr>
            <tr><td class="tog"><i class="box plus"></i></td><th colspan="2">Quality</th></tr>
            <tr><td class="tog"><i class="box plus"></i></td><th colspan="2">Inflation</th></tr>
            <tr><td class="tog"><i class="box plus"></i></td><th colspan="2">Batch Connections</th></tr>
            <tr><td class="tog"><i class="box plus"></i></td><th colspan="2">Advanced</th></tr>
            <tr><td class="tog"><i class="box plus"></i></td><th colspan="2">Statistics</th></tr>
          </table>
        </section>
      </aside>

      <section class="stage">
        <div class="toolbar">
          <span class="grip"></span>
          <button class="tb" aria-label="Previous view"><svg><use href="#mag"/></svg></button>
          <button class="tb" aria-label="Next view"><svg><use href="#magg"/></svg></button>
          <span class="sep"></span>
          <button class="tb on" aria-label="Shaded"><svg><use href="#shaded"/></svg></button>
          <button class="tb" aria-label="Look at"><svg><use href="#slab"/></svg></button>
          <button class="tb" aria-label="Views"><svg><use href="#swap"/></svg></button>
          <span class="sep"></span>
          <button class="tb" aria-label="Viewports"><svg><use href="#layers"/></svg></button>
          <span class="sep"></span>
          <button class="tb" aria-label="Rotate"><svg><use href="#rotate"/></svg></button>
          <button class="plain arrow" aria-label="Rotate options"><span class="dd"></span></button>
          <button class="tb" aria-label="Pan"><svg><use href="#pan"/></svg></button>
          <button class="tb" aria-label="Zoom"><svg><use href="#mag"/></svg></button>
          <button class="tb" aria-label="Box zoom"><svg><use href="#mag"/></svg></button>
          <button class="tb" aria-label="Zoom to fit"><svg><use href="#magb"/></svg></button>
          <button class="tb" aria-label="Zoom to selection"><svg><use href="#magn"/></svg></button>
          <span class="sep"></span>
          <span class="word">Select</span>
          <button class="tbt mode"><svg><use href="#pick"/></svg>Mode<span class="dd"></span></button>
          <button class="tb" aria-label="Smart select"><svg><use href="#filter"/></svg></button>
          <button class="tb" aria-label="Vertex"><svg><use href="#selcube"/></svg></button>
          <button class="tb" aria-label="Edge"><svg><use href="#selcube"/></svg></button>
          <button class="tb" aria-label="Face"><svg><use href="#selface"/></svg></button>
          <button class="tb on" aria-label="Body"><svg><use href="#selbody"/></svg></button>
          <button class="tb" aria-label="Node"><svg><use href="#selnode"/></svg></button>
          <button class="tb" aria-label="Element face"><svg><use href="#selelem"/></svg></button>
          <button class="tb" aria-label="Element"><svg><use href="#seldark"/></svg></button>
          <button class="tb" aria-label="Coordinates"><svg><use href="#xyz"/></svg></button>
          <button class="tb" aria-label="Probe"><svg><use href="#probe"/></svg></button>
          <span class="sep"></span>
          <button class="tbt"><svg><use href="#clip"/></svg>Clipboard<span class="dd"></span></button>
          <span class="word empty">[ Empty ]</span>
          <span class="sep"></span>
          <button class="tbt ext"><svg><use href="#extend"/></svg>Extend<span class="dd"></span></button>
          <button class="tbt by"><svg><use href="#pin"/></svg>Select By<span class="dd"></span></button>
          <button class="tbt"><svg><use href="#convert"/></svg>Convert<span class="dd"></span></button>
          <span class="dd dark low"></span>
        </div>

        <div class="view">
          <svg class="scene" viewBox="0 0 953 514" preserveAspectRatio="xMidYMid meet" aria-label="Triangular hanger with mesh bar">
            <path fill="none" stroke="#595c5e" stroke-width="4" stroke-linecap="round" d="M275 21L96 321"/>
            <path fill="none" stroke="#a2a5a8" d="M274 21L95 320"/>
            <path fill="none" stroke="#77797b" stroke-width="4" stroke-linecap="round" d="M276 21L499 321"/>
            <path fill="none" stroke="#cdd0d2" stroke-width="1.500" d="M276 20L500 320"/>
            <path fill="#f00cc8" d="M89 324h4q0-4 4-4t4 4l1-1h300v-1h90l4-3 4 3h9q3 5 3 16t-3 16H338v1H102q-1 5-5 5t-4-5h-4q-3-7-3-16t3-15z"/>
            <path fill="none" stroke="#b90f9c" d="M402 322.500h86"/>
            <path fill="none" stroke="#8c4fa8" stroke-width="1.500" d="M494 321l5 2 2-4"/>
          </svg>
          <div class="legend">
            <h4>Mesh</h4>
            <p>3/20/2021 10:15 PM</p>
            <p class="state">Meshing State</p>
            <p class="key"><i class="pink"></i>Obsolete Mesh</p>
            <p class="key"><i class="gold"></i>Failed Mesh</p>
          </div>
          <div class="brand"><strong>ANSYS</strong><span>2020 <b>R1</b></span></div>
          <svg class="scale" viewBox="0 0 300 36">
            <path fill="#fff" fill-opacity=".4" stroke="#222" d="M.500 10.500h299v9H.500z"/>
            <path d="M0 10h75v10H0zM150 10h75v10h-75z"/>
            <text x="0" y="8">0</text><text x="149" y="8">3.5e+03</text><text x="311" y="8">7e+03 (mm)</text>
            <text x="75" y="33">1.75e+03</text><text x="224" y="33">5.25e+03</text>
          </svg>
          <svg class="triad" viewBox="0 0 90 74">
            <circle cx="45" cy="36" r="5.500" fill="url(#ballC)"/>
            <path stroke="#c80f0f" stroke-width="3.500" d="M67 68l6-12"/>
            <circle cx="73.500" cy="54" r="5" fill="url(#ballR)"/>
            <path stroke="#1c7c1c" stroke-width="3" d="M26 68.500h41"/>
            <path fill="#0a5d12" d="M14 68.500l14-5v10z"/>
            <path stroke="#0a0a8c" stroke-width="3.500" d="M64 30l3 39"/>
            <path fill="#0505a8" d="M63 18l6 14H58z"/>
            <text x="63" y="10" fill="#27277f">Z</text><text x="79" y="47" fill="#d4354e">X</text><text x="7" y="69" fill="#3d9a4d">Y</text>
          </svg>
        </div>
      </section>
    </div>

    <footer class="status">
      <button class="plain msg"><svg viewBox="0 0 12 12"><path fill="#f1d9a3" stroke="#c79a40" stroke-width=".6" d="M0 5h11v5H5l-2 2v-2H0z"/><circle cx="7" cy="4" r="3.900" fill="#10209c"/><path stroke="#fff" stroke-width="1.300" d="M7 1.500v1M7 3.500v3"/></svg>4 Messages</button>
      <span class="nosel">No Selection</span>
      <button class="plain unit"><span class="uu"></span>Metric (mm, kg, N, s, mV, mA)</button>
      <span>Degrees</span><span>RPM</span><span>Celsius</span>
    </footer>
  </main>
  <div class="activate">Activate Windows</div>
</div>
</body>
</html>
```
FILE: styles.css
```css
* { box-sizing: border-box; }
body {
  margin: 0; height: 100vh; padding: 28px 0; background: #000;
  display: flex; flex-direction: column; overflow: hidden;
  font: 8px/10px "Open Sans", "Noto Sans", sans-serif; color: #262626;
}
.defs { position: absolute; width: 0; height: 0; }
h1, h2, h3, h4, p, ul { margin: 0; padding: 0; font: inherit; }
button, input, select { font: inherit; color: inherit; margin: 0; padding: 0; border: 0; background: none; border-radius: 0; outline: 0; }
select { appearance: none; }
input::placeholder { color: #9a9a9a; opacity: 1; }
svg { display: block; flex: none; }
.plain { display: flex; align-items: center; justify-content: center; }
.ic12 { width: 12px; height: 12px; }
.dd { flex: none; width: 0; height: 0; border: 2px solid transparent; border-top-color: #666; border-bottom: 0; }
.dd.dark { border-width: 3px; border-top-color: #111; border-bottom: 0; }

.desktop {
  flex: 1; min-height: 0; position: relative; overflow: hidden;
  display: flex; padding: 10px 6px 6px 12px;
  background: linear-gradient(90deg, #10a8f3 0, #0a90e6 30%, #0664d2 60%, #0543b8 85%, #053cae 100%);
}
.shortcut { position: absolute; left: 13px; top: 2px; width: 8px; }
.globe { position: absolute; left: 25px; top: -7px; width: 12px; height: 10px; border-radius: 50%; background: #d9ecf8; }
.books { position: absolute; left: 177px; top: 0; width: 34px; height: 7px; background: linear-gradient(90deg, #14701c 0 12px, #b5551c 12px 23px, #1c7a22 23px); }
.activate { position: absolute; right: 70px; bottom: -4px; font-size: 14px; line-height: 16px; color: rgba(190, 205, 225, .45); }

.window {
  flex: 1; min-width: 0; display: flex; flex-direction: column; background: #f0f0f2;
  box-shadow: -2px -1px 0 #e6f3fb, -3px 0 0 #3d7da9;
}
.titlebar { display: flex; align-items: center; height: 19px; flex: none; }
.quick { display: flex; align-items: center; gap: 2px; padding-left: 5px; width: 89px; }
.qsave { border-left: 1px solid #ddd; padding-left: 3px; margin-left: 3px; }
.context { align-self: stretch; width: 39px; border-top: 2px solid #3a5e9c; background: #d6e3f7; color: #3f6eb4; text-align: center; line-height: 18px; }
.titlebar h1 { flex: 1; text-align: center; }
.winbtns { display: flex; gap: 17px; padding-right: 8px; width: 128px; justify-content: flex-end; }
.winbtns svg { width: 8px; height: 8px; }

.tabs { display: flex; height: 18px; gap: 1px; flex: none; border-bottom: 1px solid #d8d8da; }
.tab { padding: 0 10px; }
.tab.file { width: 40px; margin-right: 5px; background: #0a74c8; color: #fff; }
.tab.active { width: 40px; background: #fcfcfc; margin-bottom: -1px; box-shadow: 0 0 0 1px #e2e2e4; clip-path: inset(-1px -1px 0 -1px); }
.tab, .tab.active, .tab.file { text-align: center; padding-left: 9px; padding-right: 10px; }
.tabtools { margin-left: auto; display: flex; align-items: center; gap: 5px; padding-right: 3px; }
.tabtools svg { width: 10px; height: 10px; }
.launch { width: 115px; height: 14px; border: 1px solid #dcdcdc; background: #fff; padding: 0 2px; }
.help svg { width: 11px; height: 11px; }

.ribbon { display: flex; background: #fcfcfc; border-bottom: 3px solid #e9e9ec; padding-top: 2px; height: 64px; flex: none; }
.group { display: grid; grid-template-rows: 45px 11px; height: 56px; border-right: 1px solid #d6d6d6; }
.g-outline { grid-template-columns: 45px 36px 41px; padding-left: 4px; }
.g-solve { grid-template-columns: 87px 28px; padding: 0 4px; position: relative; }
.g-insert { grid-template-columns: 40px 85px 59px 68px; }
.g-tools { grid-template-columns: 36px 39px 47px 61px 97px 79px; }
.g-layout { grid-template-columns: 38px 74px; }
.group h2 { grid-column: 1 / -1; text-align: center; line-height: 11px; }
.col { display: grid; grid-template-rows: repeat(3, 15px); }
.small { display: flex; align-items: center; gap: 1px; white-space: nowrap; text-align: left; }
.small svg { width: 11px; height: 11px; }
.small .dd { margin-left: 2px; }
.off { color: #9b9b9b; }
.big { display: flex; flex-direction: column; align-items: center; justify-content: flex-start; padding-top: 2px; line-height: 9px; white-space: nowrap; }
.g-outline .big { width: 42px; }
.big svg { width: 22px; height: 22px; margin-bottom: 4px; }
.big .dd { margin-top: 4px; }
.unitbox { position: relative; }
.mft { position: absolute; left: 0; right: 0; top: 11px; font-size: 9px; line-height: 10px; text-align: center; font-weight: 600; }
.pick { display: flex; align-items: center; border: 1px solid #d4d4d4; background: #fff; height: 15px; padding-right: 3px; }
.pick select { flex: 1; min-width: 0; padding-left: 1px; height: 13px; }
.tick { display: flex; align-items: center; gap: 4px; padding-left: 2px; }
input[type="checkbox"] { appearance: none; width: 9px; height: 9px; border: 1px solid #cfcfcf; background: #fff; position: relative; }
input:checked::after { content: ""; position: absolute; left: 2px; top: 0; width: 3px; height: 5px; border: solid #333; border-width: 0 1px 1px 0; transform: rotate(40deg); }
.cores { display: flex; align-items: center; gap: 2px; padding-left: 1px; }
.cores input { width: 34px; height: 14px; border: 1px solid #d4d4d4; background: #fff; padding: 0 2px; }
.launcher { position: absolute; right: 1px; bottom: 3px; }
.launcher svg { width: 7px; height: 7px; }

.work { flex: 1; min-height: 0; display: flex; }
.side { width: 309px; flex: none; display: flex; flex-direction: column; padding-right: 3px; }
.outline { display: flex; flex-direction: column; background: #fff; }
.panehead { display: flex; align-items: center; height: 14px; padding: 0 5px 0 4px; gap: 4px; flex: none; background: #ededf0; color: #222; }
.panehead h3 { color: #444; }
.panehead.blue { height: 12px; background: #0a74c8; color: #fff; }
.panehead.blue h3 { color: #fff; }
.panehead .plain { width: 8px; }
.panehead svg { width: 8px; height: 8px; }
.panehead .dd { border-width: 3px; border-top-color: currentColor; border-bottom: 0; }
.hatch { flex: 1; height: 4px; background: repeating-linear-gradient(45deg, #d2d2d6 0 1px, transparent 1px 2px); }
.blue .hatch { background: repeating-linear-gradient(45deg, #1f80cd 0 1px, transparent 1px 2px); }
.treebar { display: flex; align-items: center; height: 20px; background: #f0f0f2; padding-left: 6px; flex: none; }
.grip { width: 4px; height: 12px; background: repeating-linear-gradient(#c4c4c6 0 1px, transparent 1px 2px); }
.treebar .pick { width: 71px; margin-left: 6px; }
.treebar input { width: 65px; height: 15px; border: 1px solid #d4d4d4; background: #fff; padding: 0 2px; }
.treebar svg { width: 10px; height: 10px; }
.treebar .plain { padding: 0 4px 0 3px; }
.dd.low { margin-top: 6px; }

.tree { list-style: none; display: grid; grid-auto-rows: 1fr; height: 286px; padding-bottom: 10px; font-family: Roboto, "Liberation Sans", sans-serif; color: #1c1c1c; }
.tree li { display: flex; align-items: center; white-space: nowrap; min-height: 0; }
.tree .root { padding-left: 6px; }
.tree b { font-family: "Open Sans", sans-serif; color: #111; }
.tree li > i { width: 19px; align-self: stretch; flex: none; font-style: normal; position: relative; }
.tree li > i.st { width: 8px; }
.tree .ti { width: 12px; height: 11px; }
.tree .st { width: 8px; height: 12px; margin: 0 -1px; }
.tree li > span, .tree li > b { margin-left: 2px; padding: 0 1px; }
.tree i.v::before { content: ""; position: absolute; left: 9px; top: 0; bottom: 0; border-left: 1px dotted #b0b0b0; }
.tree i.v.end::before { bottom: 50%; }
.tree i.h::after { content: ""; position: absolute; left: 10px; right: 0; top: 50%; border-top: 1px dotted #b0b0b0; }
.tree i.box { display: flex; align-items: center; justify-content: center; }
.tree .box::before, .tog .box {
  content: ""; width: 7px; height: 7px; border: 1px solid #8f8f8f;
  background: linear-gradient(#333, #333) center / 3px 1px no-repeat, #fff;
}
.tree .plus::before, .tog .plus {
  background: linear-gradient(#333, #333) center / 3px 1px no-repeat, linear-gradient(#333, #333) center / 1px 3px no-repeat, #fff;
}
.tree i.box::after { content: ""; position: absolute; left: 14px; right: 0; top: 50%; border-top: 1px dotted #b0b0b0; }
.tree .picked { position: relative; background: #0a68bd; color: #fff; }
.cursor { position: absolute; left: 15px; top: 1px; width: 10px; height: 15px; z-index: 2; }

.details { flex: 1; min-height: 0; background: #fff; border-top: 1px solid #dcdce0; }
table { width: 100%; border-collapse: collapse; table-layout: fixed; }
.c1 { width: 10px; }
.c2 { width: 72px; }
td, th { height: 13px; padding: 0 0 1px 2px; text-align: left; line-height: 10px; border: 1px solid #a6a6a6; white-space: nowrap; }
th { color: #111; font-weight: 700; }
.tog { border-width: 0 1px 0 0; padding: 0 1px; background: #fafafa; }
.tog .box { display: block; }
td.on { background: #0a74d4; color: #fff; }
.drop { display: flex; align-items: center; height: 11px; }
.drop select { flex: 1; height: 10px; }
.knob { width: 11px; height: 11px; display: flex; align-items: center; justify-content: center; background: #ececec; border: 1px solid #fff; border-right-color: #777; border-bottom-color: #777; }
.knob .dd { border-width: 3px; border-top-color: #111; border-bottom: 0; }
.esize { display: flex; align-items: center; gap: 3px; }

.stage { flex: 1; min-width: 0; display: flex; flex-direction: column; }
.toolbar { display: flex; align-items: center; height: 17px; padding: 0 0 1px 7px; background: #f0f0f2; flex: none; line-height: 9px; }
.toolbar .grip { margin-right: 4px; }
.tb { width: 16px; height: 16px; display: flex; align-items: center; justify-content: center; flex: none; }
.tb svg, .tbt svg { width: 12px; height: 12px; }
.tb.on { border: 1px solid #7fb4cf; background: #e2eef4; }
.sep { width: 1px; height: 12px; background: #d2d2d4; margin: 0 2px 0 1px; flex: none; }
.arrow { width: 8px; }
.word { padding: 0 5px 0 3px; white-space: nowrap; }
.tbt { display: flex; align-items: center; gap: 1px; white-space: nowrap; }
.tbt .dd { margin-left: 2px; }
.mode { margin-right: 6px; }
.empty { padding: 0 3px 0 8px; }
.ext { padding-left: 1px; margin-right: 8px; }
.by { margin-right: 6px; }
.toolbar .low { margin-left: 3px; }

.view { flex: 1; min-height: 0; position: relative; background: linear-gradient(#6b8cdd 0, #b9c8ec 55%, #dde5f5 78%, #fff 100%); color: #111; }
.scene { position: absolute; inset: 0; width: 100%; height: 100%; }
.legend { position: relative; padding: 9px 0 0 10px; line-height: 11px; }
.legend h4 { font-weight: 700; }
.legend .state { margin-top: 24px; margin-bottom: 2px; }
.key { display: flex; align-items: center; gap: 4px; height: 13px; padding-left: 1px; }
.key i { width: 11px; height: 11px; border: 1px solid #333; }
.pink { background: #f00cc8; }
.gold { background: #fcc206; }
.brand { position: absolute; right: 18px; top: 17px; color: #fff; text-align: right; display: flex; flex-direction: column; font-size: 12px; line-height: 14px; }
.brand strong { font-size: 17px; line-height: 20px; font-weight: 700; }
.scale { position: absolute; left: 50%; bottom: 12px; width: 300px; height: 36px; margin-left: -150px; overflow: visible; }
.scale text { text-anchor: middle; font-size: 8px; }
.triad { position: absolute; right: 48px; bottom: 58px; width: 90px; height: 74px; overflow: visible; }
.triad text { text-anchor: middle; font-size: 9px; }

.status { display: flex; align-items: center; justify-content: flex-end; height: 16px; flex: none; background: #0a74c8; color: #fff; padding-right: 19px; gap: 9px; }
.msg svg { width: 12px; height: 11px; margin-right: 1px; }
.nosel { margin: 0 10px 0 4px; }
.unit { margin-right: 4px; }
.uu { width: 0; height: 0; border: 3px solid transparent; border-top: 0; border-bottom-color: #fff; margin-right: 4px; }
```
